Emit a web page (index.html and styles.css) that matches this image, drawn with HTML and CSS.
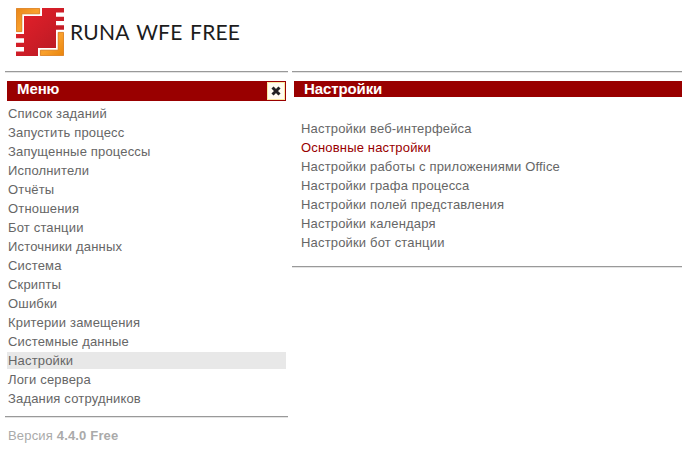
FILE: index.html
```
<!DOCTYPE html>
<html lang="ru">
<head>
  <meta charset="UTF-8">
  <title>Runa WFE Free</title>
  <link rel="stylesheet" href="styles.css">
</head>
<body>

<div class="header">
  <svg class="logo" width="48" height="48" viewBox="0 0 48 48">
    <defs>
      <linearGradient id="red" x1="0" y1="0" x2="1" y2="1">
        <stop offset="0" stop-color="#e8202a"/>
        <stop offset="1" stop-color="#b51a24"/>
      </linearGradient>
      <linearGradient id="orange" x1="0" y1="0" x2="1" y2="1">
        <stop offset="0" stop-color="#e8861a"/>
        <stop offset="0.5" stop-color="#f9a02c"/>
        <stop offset="1" stop-color="#e8850c"/>
      </linearGradient>
    </defs>
    <path fill="url(#red)" d="M26 0H48V4.500H40V8.700H48V13H40V17.300H48V21.800H40V40H22V48H0V43.500H8V39H0V34.700H8V30.300H0V26H8V8H26Z"/>
    <path fill="url(#orange)" stroke="#d8740c" stroke-width="0.8" d="M.4.4H23.600V5.800H5.800V23.600H.4Z"/>
    <path fill="url(#orange)" stroke="#d8740c" stroke-width="0.8" d="M47.600 24.400V47.600H24.400V42.200H42.200V24.400Z"/>
  </svg>
  <div class="brand">RUNA WFE FREE</div>
</div>

<div class="page">
  <div class="sidebar">
    <hr>
    <div class="box">
      <div class="title menu-title">
        <span>Меню</span>
        <button class="close" aria-label="Закрыть">
          <svg width="10" height="10" viewBox="0 0 10 10"><path d="M1.500 1.500L8.500 8.500M8.500 1.500L1.500 8.500" stroke="#222" stroke-width="3"/></svg>
        </button>
      </div>
      <ul class="menu">
        <li>Список заданий</li>
        <li>Запустить процесс</li>
        <li>Запущенные процессы</li>
        <li>Исполнители</li>
        <li>Отчёты</li>
        <li>Отношения</li>
        <li>Бот станции</li>
        <li>Источники данных</li>
        <li>Система</li>
        <li>Скрипты</li>
        <li>Ошибки</li>
        <li>Критерии замещения</li>
        <li>Системные данные</li>
        <li class="selected">Настройки</li>
        <li>Логи сервера</li>
        <li>Задания сотрудников</li>
      </ul>
    </div>
    <hr>
    <div class="version">Версия <b>4.4.0 Free</b></div>
  </div>

  <div class="content">
    <hr>
    <div class="box">
      <div class="title">Настройки</div>
      <ul class="settings">
        <li>Настройки веб-интерфейса</li>
        <li class="active">Основные настройки</li>
        <li>Настройки работы с приложениями Office</li>
        <li>Настройки графа процесса</li>
        <li>Настройки полей представления</li>
        <li>Настройки календаря</li>
        <li>Настройки бот станции</li>
      </ul>
    </div>
    <hr>
  </div>
</div>

</body>
</html>
```
FILE: styles.css
```
body {
  margin: 0;
  font-family: "Liberation Sans", Arial, sans-serif;
  font-size: 13px;
  color: #666;
  background: #fff;
  overflow: hidden;
}
.header {
  display: flex;
  height: 63px;
  padding: 8px 0 0 16px;
}
.logo {
  display: block;
}
.brand {
  margin: 10px 0 0 6px;
  font-family: Lato, sans-serif;
  font-size: 21px;
  line-height: 28px;
  color: #1c1c1c;
  white-space: nowrap;
  letter-spacing: 0.2px;
  word-spacing: 2px;
}
.page {
  display: flex;
  gap: 4px;
  padding-left: 5px;
}
.sidebar {
  width: 283px;
}
.content {
  flex: 1;
}
hr {
  height: 2px;
  margin: 0;
  border: 0;
  box-sizing: border-box;
  border-top: 1px solid #999;
  border-bottom: 1px solid #e4e4e4;
}
.box {
  padding: 8px 2px 9px;
}
.content .box {
  padding: 8px 0 15px 2px;
}
.title {
  height: 16px;
  padding-left: 10px;
  line-height: 16px;
  font-size: 15px;
  font-weight: bold;
  letter-spacing: -0.1px;
  color: #fff;
  background: #900;
}
.menu-title {
  display: flex;
  justify-content: space-between;
  height: 20px;
}
.close {
  display: flex;
  align-items: center;
  justify-content: center;
  width: 18px;
  height: 18px;
  margin: 1px;
  padding: 0;
  border: 1px solid #fbe9a0;
  background: #fffdf0;
}
ul {
  margin: 0;
  padding: 0;
  list-style: none;
}
li {
  height: 17px;
  margin-bottom: 2px;
  padding-left: 1px;
  line-height: 17px;
  letter-spacing: 0.17px;
  white-space: nowrap;
}
li:last-child {
  margin-bottom: 0;
}
.menu {
  padding-top: 4px;
}
.settings {
  padding: 23px 0 0 6px;
}
.selected {
  background: #e8e8e8;
}
.active {
  color: #900;
}
.version {
  padding: 9px 0 0 3px;
  line-height: 17px;
  letter-spacing: 0.17px;
  color: #aaa;
}
```
